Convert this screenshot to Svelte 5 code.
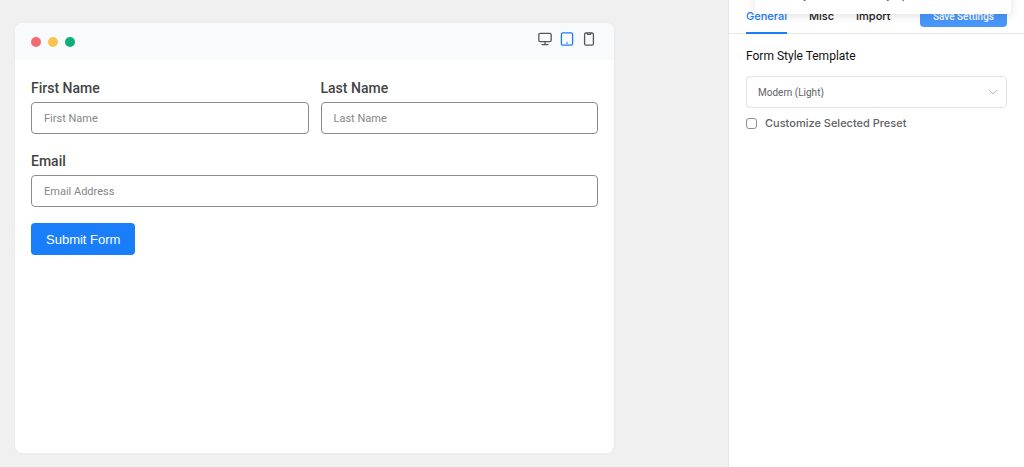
<script lang="ts">
	let device = $state('tablet');
	let tab = $state('General');
	let customize = $state(false);

	const tabs = ['General', 'Misc', 'Import'];
</script>

<div class="styler">
	<main class="preview">
		<div class="window">
			<div class="window-bar">
				<div class="dots">
					<span class="dot red"></span>
					<span class="dot yellow"></span>
					<span class="dot green"></span>
				</div>
				<div class="devices">
					<button type="button" aria-label="Desktop" class:active={device === 'desktop'} onclick={() => (device = 'desktop')}>
						<svg viewBox="0 0 14 14">
							<rect x="0.8" y="1.3" width="12.4" height="8.4" rx="1.5" />
							<path d="M7 9.7v2.8M4 12.6h6" />
						</svg>
					</button>
					<button type="button" aria-label="Tablet" class:active={device === 'tablet'} onclick={() => (device = 'tablet')}>
						<svg viewBox="0 0 14 14">
							<rect x="1.4" y="0.8" width="11.2" height="12.4" rx="1.5" />
							<path d="M6.8 11h.4" />
						</svg>
					</button>
					<button type="button" aria-label="Mobile" class:active={device === 'mobile'} onclick={() => (device = 'mobile')}>
						<svg viewBox="0 0 14 14">
							<rect x="2.6" y="0.8" width="8.8" height="12.4" rx="1.5" />
							<path d="M5 1.2l.6 1.2h2.8l.6-1.2" />
						</svg>
					</button>
				</div>
			</div>

			<form onsubmit={(e) => e.preventDefault()}>
				<div class="row">
					<div class="field">
						<label for="first-name">First Name</label>
						<input type="text" id="first-name" placeholder="First Name" />
					</div>
					<div class="field">
						<label for="last-name">Last Name</label>
						<input type="text" id="last-name" placeholder="Last Name" />
					</div>
				</div>
				<div class="field">
					<label for="email">Email</label>
					<input type="email" id="email" placeholder="Email Address" />
				</div>
				<button type="submit" class="submit">Submit Form</button>
			</form>
		</div>
	</main>

	<aside class="sidebar">
		<div class="toast" role="status">Styles successfully updated</div>
		<div class="tabs">
			{#each tabs as name}
				<button type="button" class="tab" class:active={tab === name} onclick={() => (tab = name)}>{name}</button>
			{/each}
			<button type="button" class="save">Save Settings</button>
		</div>

		<div class="settings">
			<label class="title" for="template">Form Style Template</label>
			<div class="select">
				<select id="template">
					<option>Modern (Light)</option>
				</select>
				<svg viewBox="0 0 10 6"><path d="M1 1l4 4 4-4" /></svg>
			</div>
			<label class="check">
				<input type="checkbox" bind:checked={customize} />
				Customize Selected Preset
			</label>
		</div>
	</aside>
</div>

<style>
	:global(body) {
		background: #f0f0f0;
	}

	.styler {
		display: grid;
		grid-template-columns: 1fr 296px;
		min-height: 100vh;
		font-family: Roboto, 'Liberation Sans', sans-serif;
		color: #444;
	}

	button,
	input,
	select {
		font-family: inherit;
		box-sizing: border-box;
	}

	button {
		border: 0;
		padding: 0;
		background: none;
		cursor: pointer;
	}

	.preview {
		display: flex;
		padding: 23px 114px 14px 15px;
	}

	.window {
		flex: 1;
		background: #fff;
		border-radius: 8px;
		overflow: hidden;
		box-shadow: 0 0 4px rgba(0, 0, 0, 0.04);
	}

	.window-bar {
		display: flex;
		justify-content: space-between;
		height: 37px;
		padding: 0 18px 0 16px;
		background: #f9fafc;
	}

	.dots {
		display: flex;
		align-items: center;
		gap: 7px;
	}

	.dot {
		width: 10px;
		height: 10px;
		border-radius: 50%;
	}

	.red {
		background: #f26b70;
	}

	.yellow {
		background: #fdc350;
	}

	.green {
		background: #0bb07b;
	}

	.devices {
		display: flex;
		gap: 8px;
		padding-top: 9px;
	}

	.devices button {
		width: 14px;
		height: 14px;
		color: #555;
	}

	.devices .active {
		color: #1a7efb;
	}

	svg {
		display: block;
		fill: none;
		stroke: currentColor;
		stroke-width: 1.3;
		stroke-linecap: round;
		stroke-linejoin: round;
	}

	form {
		display: flex;
		flex-direction: column;
		gap: 16px;
		padding: 17px 16px;
	}

	.row {
		display: grid;
		grid-template-columns: 1fr 1fr;
		gap: 12px;
	}

	.field label {
		display: block;
		margin-bottom: 2px;
		font-size: 14px;
		font-weight: 500;
		line-height: 23px;
	}

	.field input {
		display: block;
		width: 100%;
		height: 32px;
		padding: 0 12px;
		border: 1px solid #8c8c8c;
		border-radius: 4px;
		background: #fff;
		font-size: 11px;
	}

	.field input::placeholder {
		color: #868686;
	}

	.submit {
		align-self: flex-start;
		height: 32px;
		padding: 0 15px;
		border-radius: 4px;
		background: #1a7efb;
		color: #fff;
		font-family: 'Liberation Sans', sans-serif;
		font-size: 13px;
	}

	.sidebar {
		position: relative;
		border-left: 1px solid #e6e6e6;
		background: #fff;
	}

	.toast {
		position: absolute;
		top: -24px;
		left: 26px;
		right: 13px;
		height: 38px;
		padding: 12px 0 0 37px;
		box-sizing: border-box;
		border-radius: 4px;
		background: #fff;
		box-shadow: 0 2px 10px rgba(0, 0, 0, 0.12);
		font-family: Inter, sans-serif;
		font-size: 11px;
		line-height: 14px;
	}

	.tabs {
		display: flex;
		align-items: flex-start;
		gap: 22px;
		height: 33px;
		padding: 0 17px;
		border-bottom: 1px solid #e8e8e8;
		font-family: Inter, sans-serif;
	}

	.tab {
		height: 34px;
		border-bottom: 2px solid transparent;
		color: #222;
		font-size: 11px;
		font-weight: 500;
	}

	.tab.active {
		border-color: #1a7efb;
		color: #1a7efb;
	}

	.save {
		height: 27px;
		margin-left: auto;
		padding: 6px 13px 0;
		border-radius: 4px;
		background: #4897fc;
		color: #fff;
		font-family: Roboto, sans-serif;
		font-size: 10px;
		font-weight: 500;
	}

	.settings {
		padding: 12px 17px;
	}

	.title {
		display: block;
		margin-bottom: 10px;
		color: #111;
		font-size: 12px;
		line-height: 20px;
	}

	.select {
		position: relative;
	}

	.select select {
		appearance: none;
		width: 100%;
		height: 32px;
		padding: 0 11px;
		border: 1px solid #e2e2e2;
		border-radius: 4px;
		background: #fff;
		color: #606266;
		font-size: 10px;
	}

	.select svg {
		position: absolute;
		top: 13px;
		right: 9px;
		width: 10px;
		height: 6px;
		color: #b8bcc4;
		stroke-width: 1;
		pointer-events: none;
	}

	.check {
		display: flex;
		align-items: center;
		gap: 8px;
		margin-top: 5px;
		color: #606266;
		font-family: Inter, sans-serif;
		font-size: 11px;
		font-weight: 500;
		line-height: 20px;
	}

	.check input {
		appearance: none;
		width: 11px;
		height: 11px;
		margin: 0;
		border: 1px solid #8c8f94;
		border-radius: 3px;
		background: #fff;
	}

	.check input:checked {
		background: #1a7efb;
	}
</style>
